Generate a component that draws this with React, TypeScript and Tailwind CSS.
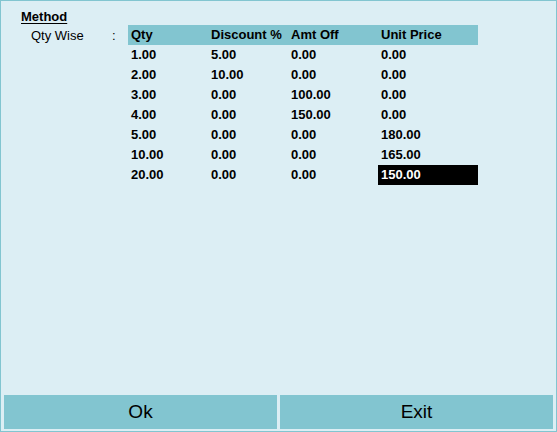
const rows = [
  ['1.00', '5.00', '0.00', '0.00'],
  ['2.00', '10.00', '0.00', '0.00'],
  ['3.00', '0.00', '100.00', '0.00'],
  ['4.00', '0.00', '150.00', '0.00'],
  ['5.00', '0.00', '0.00', '180.00'],
  ['10.00', '0.00', '0.00', '165.00'],
  ['20.00', '0.00', '0.00', '150.00'],
]

const cols = ['w-[80px]', 'w-[80px]', 'w-[90px]', 'w-[100px]']

export default function App() {
  return (
    <div
      className="flex h-[432px] w-[557px] flex-col border border-[#82c5d0] bg-[#dceef4] text-black"
      style={{ fontFamily: '"Liberation Sans", Arial, sans-serif' }}
    >
      <div className="flex-1">
        <p className="ml-[20px] mt-[8px] h-[16px] text-[13px] font-bold leading-[16px] underline underline-offset-2">
          Method
        </p>
        <div className="flex">
          <div className="ml-[30px] mt-[1px] flex h-[20px] w-[97px] items-center text-[13px] leading-[20px]">
            <span className="w-[81px]">Qty Wise</span>
            <span>:</span>
          </div>
          <div className="text-[13px] font-bold leading-[20px]">
            <div className="flex h-[20px] bg-[#82c5d0]">
              {['Qty', 'Discount %', 'Amt Off', 'Unit Price'].map((h, i) => (
                <div key={h} className={`${cols[i]} pl-[3px]`}>
                  {h}
                </div>
              ))}
            </div>
            {rows.map((r, ri) => (
              <div key={ri} className="flex h-[20px]">
                {r.map((c, ci) => {
                  const sel = ri === rows.length - 1 && ci === 3
                  return (
                    <div
                      key={ci}
                      className={`${cols[ci]} pl-[3px] ${sel ? 'bg-black text-white' : ''}`}
                    >
                      {c}
                    </div>
                  )
                })}
              </div>
            ))}
          </div>
        </div>
      </div>
      <div className="mb-[2px] flex gap-[3px] px-[3px]">
        <button className="flex h-[34px] flex-1 items-center justify-center bg-[#82c5d0] text-[19px]">
          Ok
        </button>
        <button className="flex h-[34px] flex-1 items-center justify-center bg-[#82c5d0] text-[19px]">
          Exit
        </button>
      </div>
    </div>
  )
}
